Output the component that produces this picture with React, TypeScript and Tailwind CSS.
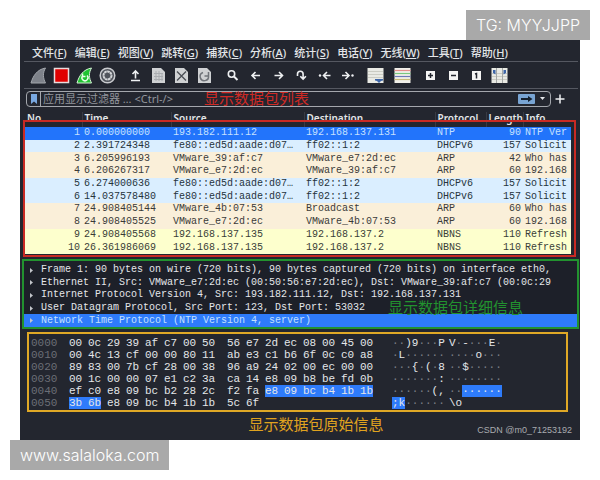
import React from "react";
import clsx from "clsx";

const menus = [
  ["文件", "F"],
  ["编辑", "E"],
  ["视图", "V"],
  ["跳转", "G"],
  ["捕获", "C"],
  ["分析", "A"],
  ["统计", "S"],
  ["电话", "Y"],
  ["无线", "W"],
  ["工具", "T"],
  ["帮助", "H"],
];

const packets = [
  ["1", "0.000000000", "193.182.111.12", "192.168.137.131", "NTP", "90", "NTP Ver"],
  ["2", "2.391724348", "fe80::ed5d:aade:d07…", "ff02::1:2", "DHCPv6", "157", "Solicit"],
  ["3", "6.205996193", "VMware_39:af:c7", "VMware_e7:2d:ec", "ARP", "42", "Who has"],
  ["4", "6.206267317", "VMware_e7:2d:ec", "VMware_39:af:c7", "ARP", "60", "192.168"],
  ["5", "6.274000636", "fe80::ed5d:aade:d07…", "ff02::1:2", "DHCPv6", "157", "Solicit"],
  ["6", "14.037578480", "fe80::ed5d:aade:d07…", "ff02::1:2", "DHCPv6", "157", "Solicit"],
  ["7", "24.908405144", "VMware_4b:07:53", "Broadcast", "ARP", "60", "Who has"],
  ["8", "24.908405525", "VMware_e7:2d:ec", "VMware_4b:07:53", "ARP", "60", "192.168"],
  ["9", "24.908405568", "192.168.137.135", "192.168.137.2", "NBNS", "110", "Refresh"],
  ["10", "26.361986069", "192.168.137.135", "192.168.137.2", "NBNS", "110", "Refresh"],
];

const rowColors: Record<string, string> = {
  NTP: "bg-[#2274fb] text-[#c4e0ff]",
  DHCPv6: "bg-[#daeeff] text-[#26343c]",
  ARP: "bg-[#faefd9] text-[#3a3b39]",
  NBNS: "bg-[#fdffcd] text-[#3a3e38]",
};

const details = [
  "Frame 1: 90 bytes on wire (720 bits), 90 bytes captured (720 bits) on interface eth0,",
  "Ethernet II, Src: VMware_e7:2d:ec (00:50:56:e7:2d:ec), Dst: VMware_39:af:c7 (00:0c:29",
  "Internet Protocol Version 4, Src: 193.182.111.12, Dst: 192.168.137.131",
  "User Datagram Protocol, Src Port: 123, Dst Port: 53032",
  "Network Time Protocol (NTP Version 4, server)",
];

// text between square brackets is the selected part of the packet
const hexRows = [
  ["0000", "00 0c 29 39 af c7 00 50", "56 e7 2d ec 08 00 45 00", "··)9···P", "V·-···E·"],
  ["0010", "00 4c 13 cf 00 00 80 11", "ab e3 c1 b6 6f 0c c0 a8", "·L······", "····o···"],
  ["0020", "89 83 00 7b cf 28 00 38", "96 a9 24 02 00 ec 00 00", "···{·(·8", "··$·····"],
  ["0030", "00 1c 00 00 07 e1 c2 3a", "ca 14 e8 09 b8 be fd 0b", "·······:", "········"],
  ["0040", "ef c0 e8 09 bc b2 28 2c", "f2 fa [e8 09 bc b4 1b 1b]", "······(,", "··[······]"],
  ["0050", "[3b 6b] e8 09 bc b4 1b 1b", "5c 6f", "[;k]······", "\\o"],
];

const splitRuns = (text: string) =>
  text
    .split(/(\[[^\]]*\])/)
    .map((run) => ({
      text: run.replace(/[[\]]/g, "").trim(),
      selected: run.startsWith("["),
    }))
    .filter((run) => run.text);

const App = () => {
  return (
    <div className="bg-white pb-[10px] font-['Noto_Sans','Noto_Sans_CJK_SC',sans-serif]">
      <div className="flex justify-end px-[10px] pt-[10px]">
        <Watermark>TG: MYYJJPP</Watermark>
      </div>
      <main className="mx-5 bg-[#23262f] text-[#e4e6e9]">
        <MenuBar />
        <Toolbar />
        <FilterBar />
        <PacketList />
        <PacketDetails />
        <PacketBytes />
        <footer className="relative flex h-7 items-center justify-center pb-1 pl-8">
          <span className="text-[15px] leading-5 text-[#e0a31f]">显示数据包原始信息</span>
          <span className="absolute right-2 bottom-1 font-['Liberation_Sans',sans-serif] text-[9px] leading-3 text-[#a9abb0]">
            CSDN @m0_71253192
          </span>
        </footer>
      </main>
      <div className="flex px-[10px]">
        <Watermark>www.salaloka.com</Watermark>
      </div>
    </div>
  );
};

export default App;

const Watermark = ({ children }: { children: React.ReactNode }) => {
  return (
    <div className="bg-[#a9a9a9] px-[10px] font-['Inter',sans-serif] text-[16px] leading-[30px] font-light text-white">
      {children}
    </div>
  );
};

const MenuBar = () => {
  return (
    <nav className="mr-[2px] ml-1 flex h-[22px] items-center gap-2 border-b border-[#555861] pt-1 pl-2">
      {menus.map(([label, key]) => (
        <button key={key} className="text-[11px] leading-4 font-medium whitespace-nowrap">
          {label}(<u>{key}</u>)
        </button>
      ))}
    </nav>
  );
};

const ToolButton = ({ label, children }: { label: string; children: React.ReactNode }) => {
  return (
    <button aria-label={label} className="flex h-5 w-[23px] items-center justify-center">
      <svg
        width="17"
        height="17"
        viewBox="0 0 17 17"
        fill="none"
        stroke="#eef0f2"
        strokeWidth="1.6"
      >
        {children}
      </svg>
    </button>
  );
};

const fin = "M1 16C3 9 7 2.500 15.500 1C12.500 6 13 11 15.500 16Z";
const sheet = "M2 1h9l4 4v11H2z";

const Toolbar = () => {
  return (
    <div className="mr-[2px] ml-1 flex h-[27px] items-center gap-[5px] border-b border-[#555861] pl-[3px]">
      <div className="flex">
        <ToolButton label="Start capture">
          <path d={fin} fill="#7e828a" stroke="#a3a7ad" strokeWidth="1" />
        </ToolButton>
        <ToolButton label="Stop capture">
          <rect x="1.500" y="1.500" width="14" height="14" fill="#e00000" stroke="#e9dcdc" strokeWidth="1.500" />
        </ToolButton>
        <ToolButton label="Restart capture">
          <path d={fin} fill="#20c431" stroke="#d3f1d4" strokeWidth="1" />
          <path d="M6.500 9a3 3 0 1 0 4.500-.5M6.500 6.500v3h3" stroke="#e8ffe8" strokeWidth="1.500" />
        </ToolButton>
        <ToolButton label="Capture options">
          <circle cx="8.500" cy="8.500" r="7.300" fill="#50545c" stroke="#c9cbcf" strokeWidth="1.500" />
          <circle cx="8.500" cy="8.500" r="4" stroke="#d4d6d9" strokeWidth="2" strokeDasharray="2.600 .4" />
        </ToolButton>
      </div>
      <div className="flex">
        <ToolButton label="Open">
          <path d="M8.500 11.500V4.500M5.500 7l3-3 3 3M4 13.500h9" />
        </ToolButton>
        <ToolButton label="Save">
          <path d={sheet} fill="#cfd1d3" stroke="none" />
          <path d="M4 6.500h9M4 9.500h9M4 12.500h9M6 4v10M9 4v10M12 6v8" stroke="#a9acb0" strokeWidth="1" />
        </ToolButton>
        <ToolButton label="Close file">
          <path d={sheet} fill="#cfd1d3" stroke="none" />
          <path d="M4 4.500l9 9M13 4.500l-9 9" stroke="#4a4e55" strokeWidth="1.300" />
        </ToolButton>
        <ToolButton label="Reload">
          <path d={sheet} fill="#cfd1d3" stroke="none" />
          <path d="M7 5.500a4.200 4.200 0 1 0 5.500 3.500M12.500 5v4h-4" stroke="#70747a" strokeWidth="1.500" />
        </ToolButton>
      </div>
      <div className="flex">
        <ToolButton label="Find">
          <circle cx="7.500" cy="7" r="3.200" />
          <path d="M10 9.500l3.500 3.500" strokeWidth="2" />
        </ToolButton>
        <ToolButton label="Back">
          <path d="M13 8.500H5M8.500 5L5 8.500 8.500 12" />
        </ToolButton>
        <ToolButton label="Forward">
          <path d="M4.500 8.500h8M9 5l3.500 3.500L9 12" />
        </ToolButton>
        <ToolButton label="Go to packet">
          <path d="M4.500 9V7a2.800 2.800 0 0 1 5.600 0v4.500M7.300 9.200l2.800 2.800 2.800-2.800" />
        </ToolButton>
        <ToolButton label="First packet">
          <path d="M14.500 8.500h-7M11 5L7.500 8.500 11 12" />
          <circle cx="4" cy="8.500" r="1.200" fill="#eef0f2" stroke="none" />
        </ToolButton>
        <ToolButton label="Last packet">
          <path d="M3 8.500h7M6.500 5l3.500 3.500L6.500 12" />
          <circle cx="13.500" cy="8.500" r="1.200" fill="#eef0f2" stroke="none" />
        </ToolButton>
      </div>
      <div className="flex gap-1">
        <ToolButton label="Auto scroll">
          <rect x=".5" y="1" width="16" height="15" fill="#e9eae4" stroke="none" />
          <path d="M1 4.500h15M1 7.500h15M1 10.500h15" stroke="#cbccc3" strokeWidth="1" />
          <path d="M8 12h8v1.500l-2 .5-2 2-2-2-2-.5z" fill="#3e66a8" stroke="none" />
        </ToolButton>
        <ToolButton label="Colorize">
          <rect x=".5" y="1" width="16" height="15" fill="#f1f0ea" stroke="none" />
          <path d="M.5 3.500h16" stroke="#e5908c" strokeWidth="1.200" />
          <path d="M.5 6.500h16" stroke="#7bc77f" strokeWidth="1.200" />
          <path d="M.5 9.500h16" stroke="#6d79b5" strokeWidth="1.200" />
          <path d="M.5 12.500h16" stroke="#cabc79" strokeWidth="1.200" />
        </ToolButton>
      </div>
      <div className="flex">
        <ToolButton label="Zoom in">
          <rect x="4" y="4" width="9" height="9" fill="#f4f4f4" stroke="none" />
          <path d="M6 8.500h5M8.500 6v5" stroke="#23262f" strokeWidth="1.500" />
        </ToolButton>
        <ToolButton label="Zoom out">
          <rect x="4" y="4" width="9" height="9" fill="#f4f4f4" stroke="none" />
          <path d="M6 8.500h5" stroke="#23262f" strokeWidth="1.500" />
        </ToolButton>
        <ToolButton label="Normal size">
          <rect x="4" y="4" width="9" height="9" fill="#f4f4f4" stroke="none" />
          <path d="M7 7l1.500-.5v5" stroke="#23262f" strokeWidth="1.500" />
        </ToolButton>
        <ToolButton label="Resize columns">
          <rect x=".5" y="1" width="16" height="15" fill="#e9eae4" stroke="none" />
          <path d="M1 6.500h15M1 9.500h15M1 12.500h15" stroke="#cbccc3" strokeWidth="1" />
          <path d="M5.500 1v15M11.500 1v15" stroke="#a4a7a5" strokeWidth="1" />
          <path d="M2 3h2.500v4.500L2 6zM15 3h-2.500v4.500L15 6z" fill="#3e66a8" stroke="none" />
        </ToolButton>
      </div>
    </div>
  );
};

const FilterBar = () => {
  return (
    <div className="relative flex h-[23px] items-center gap-[3px] pr-[14px] pb-1 pl-[6px]">
      <div className="flex h-4 flex-1 items-center rounded-sm border border-[#a4a7ad]">
        <button aria-label="Bookmarks" className="flex h-full w-[14px] items-center justify-center border-r border-[#a4a7ad]">
          <svg width="6" height="10" viewBox="0 0 6 10">
            <path d="M0 0h6v10L3 7.500 0 10z" fill="#79a8e0" />
          </svg>
        </button>
        <input
          aria-label="显示过滤器"
          placeholder="应用显示过滤器 … <Ctrl-/>"
          className="h-full min-w-0 flex-1 bg-transparent pl-[2px] text-[11px] leading-[14px] outline-none placeholder:text-[#92959c]"
        />
        <button aria-label="Apply filter" className="flex h-[10px] w-[17px] items-center justify-center rounded-[1px] bg-[#78a4d3]">
          <svg width="13" height="8" viewBox="0 0 13 8">
            <path d="M1 3h7V1l4.500 3L8 7V5H1z" fill="#14202e" />
          </svg>
        </button>
        <button aria-label="Recent filters" className="flex h-full w-[15px] items-center justify-center">
          <svg width="5" height="3" viewBox="0 0 5 3">
            <path d="M0 0h5L2.500 3z" fill="#e4e6e9" />
          </svg>
        </button>
      </div>
      <button aria-label="Add filter button" className="flex h-4 w-[12px] items-center justify-center">
        <svg width="10" height="10" viewBox="0 0 10 10">
          <path d="M5 .5v9M.5 5h9" stroke="#f0f1f3" strokeWidth="1.500" />
        </svg>
      </button>
      <span className="absolute -top-px left-[184px] text-[15px] leading-5 text-[#cf2a25]">
        显示数据包列表
      </span>
    </div>
  );
};

const PacketList = () => {
  return (
    <section className="relative mr-1 ml-[3px] pr-[5px] pb-[5px] pl-[2px]">
      <table className="h-[142px] w-full table-fixed border-collapse text-left">
        <colgroup>
          <col className="w-[57px]" />
          <col className="w-[89px]" />
          <col className="w-[133px]" />
          <col />
          <col className="w-[51px]" />
          <col className="w-[37px]" />
          <col className="w-[48px]" />
        </colgroup>
        <thead>
          <tr className="h-[15px] text-[10px] leading-3">
            {["No.", "Time", "Source", "Destination", "Protocol", "Length", "Info"].map((name) => (
              <th key={name} className="border-r border-[#383b44] p-0 pl-[2px] align-top font-semibold last:border-r-0">
                {name}
              </th>
            ))}
          </tr>
        </thead>
        <tbody className="font-['Liberation_Mono',monospace] text-[10px] leading-3">
          {packets.map((packet) => (
            <tr key={packet[0]} className={rowColors[packet[4]]}>
              {packet.map((value, i) => (
                <td
                  key={i}
                  className={clsx(
                    "overflow-hidden p-0 px-[2px] whitespace-nowrap",
                    (i === 0 || i === 5) && "text-right"
                  )}
                >
                  {value}
                </td>
              ))}
            </tr>
          ))}
        </tbody>
      </table>
      <div className="pointer-events-none absolute inset-x-0 top-2 bottom-[2px] border-2 border-[#c92a24]"></div>
    </section>
  );
};

const PacketDetails = () => {
  return (
    <section className="relative mr-[1px] ml-[2px] border-2 border-[#22922f] bg-[#1d2029] pt-[3px]">
      <ul className="grid h-[63px] grid-rows-5 font-['Liberation_Mono',monospace] text-[10px] leading-3">
        {details.map((line, i) => (
          <li
            key={line}
            className={clsx(
              "flex items-center gap-[8px] overflow-hidden pl-[6px] whitespace-nowrap",
              i === 4 && "bg-[#2e7bfa] text-[#c4e0ff]"
            )}
          >
            <svg width="3" height="5" viewBox="0 0 3 5" className="shrink-0">
              <path d="M0 0l3 2.500L0 5z" fill="#c3c6cb" />
            </svg>
            {line}
          </li>
        ))}
      </ul>
      <span className="absolute top-9 left-[364px] text-[15px] leading-5 text-[#22922f]">
        显示数据包详细信息
      </span>
    </section>
  );
};

const HexGroup = ({ text }: { text: string }) => {
  return (
    <div className="flex w-[158px] gap-[6px]">
      {splitRuns(text).map((run, i) => (
        <span key={i} className={clsx("flex gap-[6px]", run.selected && "bg-[#2e7bfa]")}>
          {run.text.split(" ").map((byte, j) => (
            <span key={j} className="w-[13px]">
              {byte}
            </span>
          ))}
        </span>
      ))}
    </div>
  );
};

const AsciiGroup = ({ text }: { text: string }) => {
  return (
    <div className="w-[57px]">
      {splitRuns(text).map((run, i) => (
        <span key={i} className={clsx(run.selected && "inline-block bg-[#2e7bfa]")}>
          {run.text.split(/(·+)/).map((part, j) => (
            <span key={j} className={clsx(part.startsWith("·") && !run.selected && "text-[#7d8087]")}>
              {part}
            </span>
          ))}
        </span>
      ))}
    </div>
  );
};

const PacketBytes = () => {
  return (
    <section className="mt-[3px] mr-3 ml-[7px] border-2 border-[#dfa826] pt-[3px] pb-px pl-[2px] font-['Liberation_Mono',monospace] text-[11px] leading-3">
      {hexRows.map(([offset, left, right, asciiLeft, asciiRight]) => (
        <div key={offset} className="flex">
          <span className="w-[38px] text-[#6b6e76]">{offset}</span>
          <HexGroup text={left} />
          <HexGroup text={right} />
          <div className="flex pl-[7px]">
            <AsciiGroup text={asciiLeft} />
            <AsciiGroup text={asciiRight} />
          </div>
        </div>
      ))}
    </section>
  );
};
